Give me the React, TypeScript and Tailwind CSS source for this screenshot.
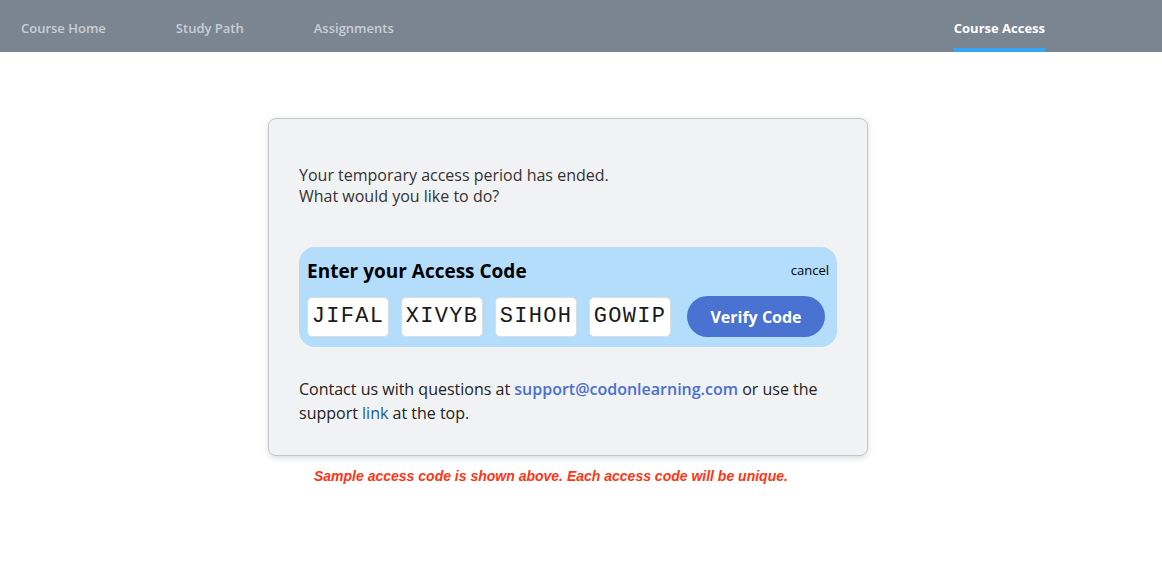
import React from 'react';

const codes = ['JIFAL', 'XIVYB', 'SIHOH', 'GOWIP'];

export default function App() {
    return (
        <div className="min-h-screen bg-white" style={{ fontFamily: '"Open Sans", "Noto Sans", sans-serif' }}>
            {/* Top nav */}
            <nav className="h-[52px] bg-[#7b8591] flex items-stretch justify-between pl-[21px] pr-[117px]">
                <div className="flex items-center pt-[6px] gap-[70px] text-[13px] font-semibold text-[#c9ced6]">
                    <span>Course Home</span>
                    <span>Study Path</span>
                    <span>Assignments</span>
                </div>
                <div className="flex flex-col justify-end">
                    <span className="text-[13px] font-bold text-white pb-[10px]">Course Access</span>
                    <div className="h-[4px] bg-[#36a6f2]" />
                </div>
            </nav>

            {/* Access card */}
            <div className="ml-[268px] mt-[66px] w-[600px]">
                <div className="bg-[#f1f2f4] border border-[#c3c6cb] rounded-[8px] shadow-[0_2px_6px_rgba(0,0,0,0.15)] pl-[30px] pr-[30px] pt-[46px] pb-[30px]">
                    <p className="text-[16px] leading-[21px] text-[#333]">
                        Your temporary access period has ended.
                        <br />
                        What would you like to do?
                    </p>

                    <div className="mt-[40px] bg-[#b3ddfa] rounded-[16px] pl-[8px] pr-[8px] pt-[11px] pb-[10px]">
                        <div className="flex items-center justify-between">
                            <h2 className="text-[19px] font-bold text-black leading-[26px]">Enter your Access Code</h2>
                            <button className="text-[13px] text-black">cancel</button>
                        </div>
                        <div className="mt-[12px] flex items-center gap-[12px]">
                            {codes.map((c) => (
                                <div
                                    key={c}
                                    className="w-[82px] h-[40px] bg-white rounded-[5px] border border-[#d8dde2] flex items-center justify-center text-[22px] tracking-[1.3px] text-[#1a1a1a]"
                                    style={{ fontFamily: '"Liberation Mono", "Courier New", monospace' }}
                                >
                                    {c}
                                </div>
                            ))}
                            <button className="ml-[4px] w-[138px] h-[41px] rounded-full bg-[#4a72d1] text-white text-[16px] font-bold">
                                Verify Code
                            </button>
                        </div>
                    </div>

                    <p className="mt-[30px] text-[16px] leading-[24px] text-[#222]">
                        Contact us with questions at{' '}
                        <a className="text-[#4a6fd0] font-semibold">support@codonlearning.com</a> or use the
                        <br />
                        support <a className="text-[#1d5a8c]">link</a> at the top.
                    </p>
                </div>

                <p
                    className="mt-[10px] ml-[46px] text-[14px] font-bold italic text-[#ff3514]"
                    style={{ fontFamily: '"Liberation Sans", Arial, sans-serif' }}
                >
                    Sample access code is shown above. Each access code will be unique.
                </p>
            </div>
        </div>
    );
}
